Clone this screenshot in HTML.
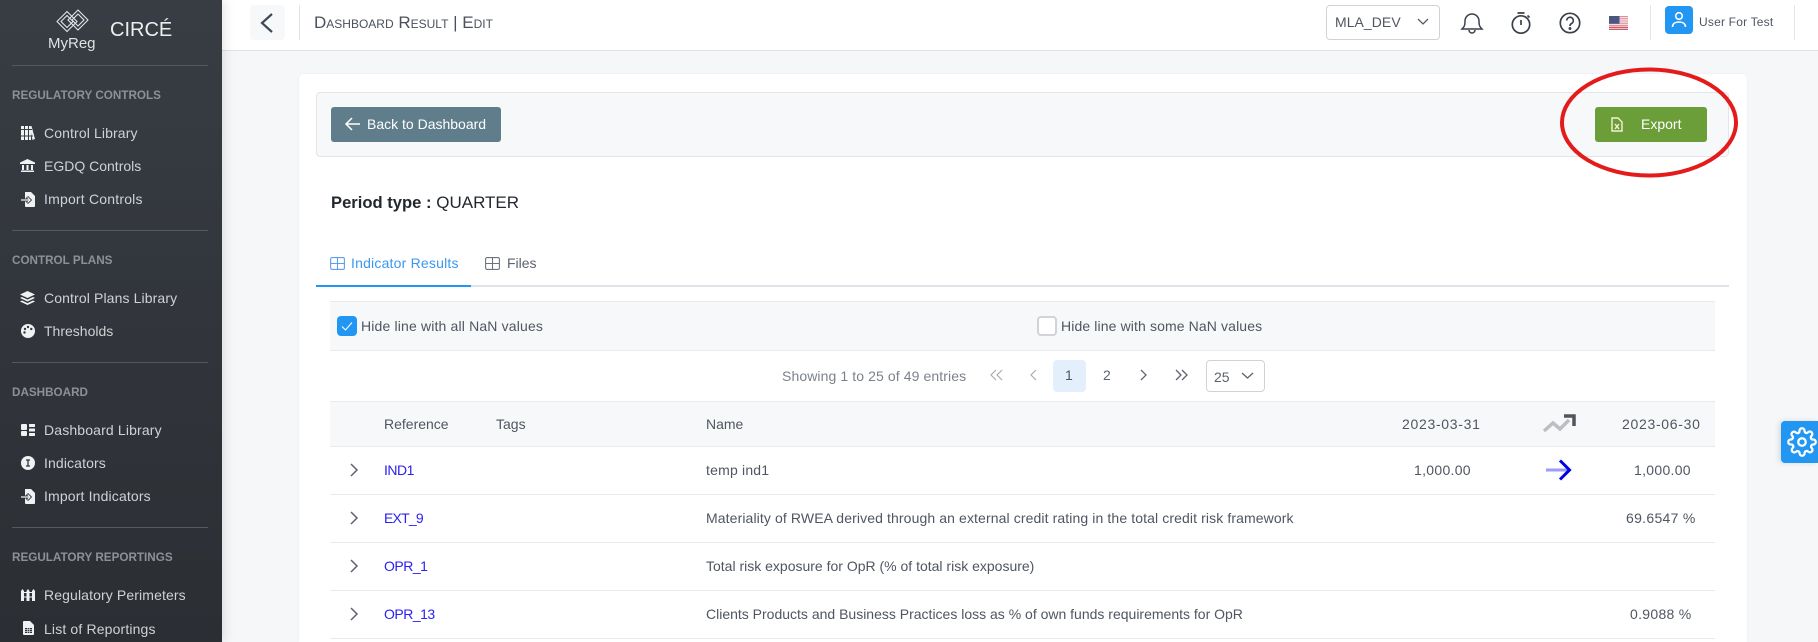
<!DOCTYPE html>
<html><head><meta charset="utf-8">
<style>
*{box-sizing:border-box}
html,body{margin:0;padding:0;width:1818px;height:642px;overflow:hidden;background:#f6f7f9;font-family:"Liberation Sans",sans-serif}
.t{position:absolute;white-space:nowrap;line-height:20px;height:20px;font-size:14px;color:#4f5661}
.b{position:absolute}
svg{position:absolute;overflow:visible}
#side{position:absolute;left:0;top:0;width:222px;height:642px;background:linear-gradient(180deg,#383d44,#2b2e33);box-shadow:3px 0 10px rgba(0,0,0,.10)}
#side .t{color:#cfd2d5;font-size:14px;letter-spacing:.12px}
#side .s{color:#8d9196;font-size:11.7px;font-weight:bold;letter-spacing:0}
#side hr{position:absolute;left:12px;width:196px;margin:0;border:0;border-top:1px solid #55595f}
.ln{position:absolute;left:330px;width:1385px;height:1px;background:#e8eaee}
.blue{color:#2b20f0;letter-spacing:-.5px}
.d{letter-spacing:.7px}
.n{letter-spacing:.3px}
</style></head><body>

<div class="b" style="left:222px;top:0;width:1596px;height:51px;background:#fff;border-bottom:1px solid #dfe2e8"></div>

<div id="side">
<svg style="left:56px;top:9px" width="33" height="24" viewBox="0 0 33 24" fill="none" stroke="#e4e6e8" stroke-width="1.100"><path d="M1 12.500 11 2.500 21 12.500 11 22.500z"/><path d="M12 11 22 1l10 10-10 10z"/><path d="M5 12.500 11 6.500 17 12.500 11 18.500z"/><path d="M16 11l6-6 6 6-6 6z"/></svg>
<div class="t" style="left:48px;top:34px;font-size:15px;color:#dfe1e3;letter-spacing:0">MyReg</div>
<div class="t" style="left:110px;top:20px;font-size:20px;color:#eceef0;letter-spacing:0">CIRCÉ</div>
<hr style="top:65px">
<div class="t s" style="left:12px;top:86px">REGULATORY CONTROLS</div>
<svg style="left:20px;top:126px" width="15" height="14" viewBox="0 0 15 14" fill="#f0f1f2"><path d="M1 0h3v14H1zM5 0h3v14H5zM9 0h2.500l3.500 13-2.500 1L11 7v7H9z"/><path d="M0 3.500h12M0 10h13" stroke="#383d44" stroke-width="1"/></svg>
<div class="t" style="left:44px;top:123px">Control Library</div>
<svg style="left:20px;top:159px" width="15" height="14" viewBox="0 0 15 14" fill="#f0f1f2"><path d="M7.500 0 15 3.500v1.500H0V3.500zM2 6h2v5H2zM6.500 6h2v5h-2zM11 6h2v5h-2zM1 11.500h13V13H1z"/></svg>
<div class="t" style="left:44px;top:156px;letter-spacing:0">EGDQ Controls</div>
<svg style="left:21px;top:192px" width="15" height="15" viewBox="0 0 15 15"><path d="M4 0h6l4 4v10a1 1 0 0 1-1 1H5a1 1 0 0 1-1-1z" fill="#f0f1f2"/><path d="M0 8h9M6 5l3 3-3 3" fill="none" stroke="#383d44" stroke-width="3"/><path d="M0 8h9M6.500 5.500 9 8l-2.500 2.500" fill="none" stroke="#f0f1f2" stroke-width="1.200"/></svg>
<div class="t" style="left:44px;top:189px;letter-spacing:.2px">Import Controls</div>
<hr style="top:230px">
<div class="t s" style="left:12px;top:251px">CONTROL PLANS</div>
<svg style="left:20px;top:291px" width="15" height="14" viewBox="0 0 15 14" fill="#f0f1f2"><path d="M7.500 0 15 3.500 7.500 7 0 3.500zM2 6l5.500 2.600L13 6l2 1-7.500 3.500L0 7zM2 9.500l5.500 2.600L13 9.500l2 1L7.500 14 0 10.500z"/></svg>
<div class="t" style="left:44px;top:288px">Control Plans Library</div>
<svg style="left:21px;top:324px" width="14" height="14" viewBox="0 0 14 14"><circle cx="7" cy="7" r="7" fill="#f0f1f2"/><circle cx="4" cy="5" r="1.200" fill="#343840"/><circle cx="7" cy="3" r="1.200" fill="#343840"/><circle cx="10.300" cy="5" r="1.200" fill="#343840"/><circle cx="3.500" cy="8.500" r="1.200" fill="#343840"/></svg>
<div class="t" style="left:44px;top:321px;letter-spacing:0">Thresholds</div>
<hr style="top:362px">
<div class="t s" style="left:12px;top:383px">DASHBOARD</div>
<svg style="left:21px;top:424px" width="14" height="12" viewBox="0 0 14 12" fill="#f0f1f2"><rect width="6" height="6" rx="1"/><rect y="7" width="6" height="5" rx="1"/><rect x="8" width="6" height="3" rx=".5"/><rect x="8" y="4.500" width="6" height="3" rx=".5"/><rect x="8" y="9" width="6" height="3" rx=".5"/></svg>
<div class="t" style="left:44px;top:420px;letter-spacing:.15px">Dashboard Library</div>
<svg style="left:21px;top:456px" width="14" height="14" viewBox="0 0 14 14"><circle cx="7" cy="7" r="7" fill="#f0f1f2"/><path d="M5 4h4M5 10h4M7 4v6" stroke="#30343a" stroke-width="1.300"/></svg>
<div class="t" style="left:44px;top:453px">Indicators</div>
<svg style="left:21px;top:489px" width="15" height="15" viewBox="0 0 15 15"><path d="M4 0h6l4 4v10a1 1 0 0 1-1 1H5a1 1 0 0 1-1-1z" fill="#f0f1f2"/><path d="M0 8h9M6 5l3 3-3 3" fill="none" stroke="#30343a" stroke-width="3"/><path d="M0 8h9M6.500 5.500 9 8l-2.500 2.500" fill="none" stroke="#f0f1f2" stroke-width="1.200"/></svg>
<div class="t" style="left:44px;top:486px;letter-spacing:.15px">Import Indicators</div>
<hr style="top:527px">
<div class="t s" style="left:12px;top:548px">REGULATORY REPORTINGS</div>
<svg style="left:21px;top:589px" width="14" height="12" viewBox="0 0 14 12" fill="#f0f1f2"><path d="M0 2 1.500 0 3 2v10H0zM5.500 2 7 0l1.500 2v10h-3zM11 2l1.500-2L14 2v10h-3z"/><path d="M0 3.500h14M0 8h14" stroke="#f0f1f2" stroke-width="1"/></svg>
<div class="t" style="left:44px;top:585px">Regulatory Perimeters</div>
<svg style="left:23px;top:621px" width="11" height="14" viewBox="0 0 11 14"><path d="M0 1a1 1 0 0 1 1-1h6l4 4v9a1 1 0 0 1-1 1H1a1 1 0 0 1-1-1z" fill="#f0f1f2"/><path d="M2 7h7v5H2z" fill="#2e3137"/><path d="M2 8.700h7M2 10.300h7M4.300 7v5M6.600 7v5" stroke="#f0f1f2" stroke-width=".6"/></svg>
<div class="t" style="left:44px;top:619px;letter-spacing:.15px">List of Reportings</div>
</div>

<!-- header -->
<div class="b" style="left:250px;top:5px;width:35px;height:35px;background:#f6f8fa;border-radius:4px"></div>
<svg style="left:250px;top:5px" width="35" height="35" viewBox="0 0 35 35" fill="none"><path d="M22 9 12 18l10 9" stroke="#3f4a57" stroke-width="2.200"/></svg>
<div class="b" style="left:299px;top:5px;width:1px;height:35px;background:#e2e4e8"></div>
<div class="t" style="left:314px;top:13px;font-size:17px;font-variant:small-caps;color:#4a515c">Dashboard Result | Edit</div>

<div class="b" style="left:1326px;top:5px;width:114px;height:35px;border:1px solid #cfd3d9;border-radius:4px"></div>
<div class="t" style="left:1335px;top:12px;color:#4f5661;letter-spacing:.05px">MLA_DEV</div>
<svg style="left:1417px;top:18px" width="12" height="8" viewBox="0 0 12 8" fill="none"><path d="M1 1l5 5 5-5" stroke="#555c66" stroke-width="1.300"/></svg>

<svg style="left:1461px;top:13px" width="22" height="21" viewBox="0 0 22 21" fill="none" stroke="#3a414b" stroke-width="1.500"><path d="M1 16c2-2 3-3 3-8a7 7 0 0 1 14 0c0 5 1 6 3 8z"/><path d="M8 17a3 3 0 0 0 6 0"/></svg>
<svg style="left:1510px;top:12px" width="22" height="22" viewBox="0 0 22 22" fill="none" stroke="#3a414b" stroke-width="1.700"><circle cx="11" cy="12.500" r="8.700"/><path d="M7.500 1h7M11 8v5M17.500 3.500l2 2"/></svg>
<svg style="left:1559px;top:12px" width="22" height="22" viewBox="0 0 22 22" fill="none" stroke="#3a414b" stroke-width="1.700"><circle cx="11" cy="11" r="9.700"/><path d="M7.700 8.500a3.300 3.300 0 1 1 4.800 3c-1 .6-1.500 1.200-1.500 2.500"/><circle cx="11" cy="16.500" r=".6" fill="#3a414b"/></svg>
<svg style="left:1609px;top:16px" width="19" height="14" viewBox="0 0 19 14"><rect width="19" height="14" fill="#fff"/><path d="M0 .7h19M0 2.800h19M0 5h19M0 7.200h19M0 9.300h19M0 11.300h19M0 13.300h19" stroke="#d8808a" stroke-width="1.100"/><path d="M0 11.300h19M0 13.300h19" stroke="#c7525e" stroke-width="1.100"/><rect width="10.500" height="7.800" fill="#4c5680"/></svg>
<div class="b" style="left:1650px;top:5px;width:1px;height:35px;background:#e2e4e8"></div>
<div class="b" style="left:1665px;top:6px;width:28px;height:28px;background:#2196f3;border-radius:4px"></div>
<svg style="left:1665px;top:6px" width="28" height="28" viewBox="0 0 28 28" fill="none" stroke="#fff" stroke-width="1.600"><circle cx="14" cy="10" r="3.300"/><path d="M7.500 21c0-3.500 3-5 6.500-5s6.500 1.500 6.500 5"/></svg>
<div class="t" style="left:1699px;top:12px;font-size:12px;color:#4f5661;letter-spacing:.2px">User For Test</div>
<div class="b" style="left:1794px;top:5px;width:1px;height:35px;background:#e2e4e8"></div>

<!-- card -->
<div class="b" style="left:299px;top:74px;width:1448px;height:568px;background:#fff;border-radius:5px 5px 0 0;box-shadow:0 0 2px rgba(0,0,0,.06)"></div>
<div class="b" style="left:316px;top:92px;width:1413px;height:65px;background:#f7f8fa;border:1px solid #e3e5e9;border-radius:4px"></div>
<div class="b" style="left:331px;top:107px;width:170px;height:35px;background:#607d8b;border-radius:3px"></div>
<svg style="left:345px;top:117px" width="16" height="14" viewBox="0 0 16 14" fill="none" stroke="#fff" stroke-width="1.500"><path d="M15 7H1M7 1 1 7l6 6"/></svg>
<div class="t" style="left:367px;top:114px;color:#fff">Back to Dashboard</div>
<div class="b" style="left:1595px;top:107px;width:112px;height:35px;background:#6b9e38;border-radius:3px"></div>
<svg style="left:1611px;top:117px" width="12" height="15" viewBox="0 0 12 15" fill="none" stroke="#f4f2d0" stroke-width="1.400"><path d="M1 1h6l4 4v9H1z"/><path d="M4 7l4 5M8 7l-4 5"/></svg>
<div class="t" style="left:1641px;top:114px;color:#fff">Export</div>

<div class="t" style="left:331px;top:193px;font-size:17px;color:#23282f"><b style="font-size:16.6px">Period type :</b> QUARTER</div>

<!-- tabs -->
<div class="b" style="left:316px;top:285px;width:1413px;height:2px;background:#dfe2e7"></div>
<div class="b" style="left:316px;top:285px;width:155px;height:2px;background:#2196f3"></div>
<svg style="left:330px;top:257px" width="15" height="13" viewBox="0 0 15 13" fill="none" stroke="#5b9fee" stroke-width="1.100"><rect x=".6" y=".6" width="13.800" height="11.800" rx="1.500"/><path d="M.6 6.500h13.800M7.500.6v11.800"/></svg>
<div class="t" style="left:351px;top:253px;color:#3a97f2;letter-spacing:.2px">Indicator Results</div>
<svg style="left:485px;top:257px" width="15" height="13" viewBox="0 0 15 13" fill="none" stroke="#6d737c" stroke-width="1.100"><rect x=".6" y=".6" width="13.800" height="11.800" rx="1.500"/><path d="M.6 6.500h13.800M7.500.6v11.800"/></svg>
<div class="t" style="left:507px;top:253px;color:#5d646e">Files</div>

<!-- filter band -->
<div class="b" style="left:330px;top:301px;width:1385px;height:50px;background:#f7f8fa;border-top:1px solid #e8eaee;border-bottom:1px solid #e8eaee"></div>
<div class="b" style="left:337px;top:316px;width:20px;height:20px;background:#2196f3;border-radius:4px"></div>
<svg style="left:337px;top:316px" width="20" height="20" viewBox="0 0 20 20" fill="none"><path d="M5 10.500l3.500 3.500L15 6.500" stroke="#fff" stroke-width="1.100"/></svg>
<div class="t" style="left:361px;top:316px;color:#4f5661;letter-spacing:.16px">Hide line with all NaN values</div>
<div class="b" style="left:1037px;top:316px;width:20px;height:20px;background:#fff;border:2px solid #d0d3d9;border-radius:4px"></div>
<div class="t" style="left:1061px;top:316px;color:#4f5661;letter-spacing:.12px">Hide line with some NaN values</div>

<!-- pagination -->
<div class="t" style="left:782px;top:366px;font-size:14px;color:#7c828b;letter-spacing:.1px">Showing 1 to 25 of 49 entries</div>
<svg style="left:990px;top:369px" width="14" height="12" viewBox="0 0 14 12" fill="none" stroke="#a8adb4" stroke-width="1.200"><path d="M6 1 1 6l5 5M12 1 7 6l5 5"/></svg>
<svg style="left:1030px;top:369px" width="7" height="12" viewBox="0 0 7 12" fill="none" stroke="#a8adb4" stroke-width="1.200"><path d="M6 1 1 6l5 5"/></svg>
<div class="b" style="left:1053px;top:360px;width:33px;height:32px;background:#e3f0fc;border-radius:4px"></div>
<div class="t" style="left:1065px;top:365px;font-size:14px;color:#4f5661">1</div>
<div class="t" style="left:1103px;top:365px;font-size:14px;color:#5d646e">2</div>
<svg style="left:1140px;top:369px" width="7" height="12" viewBox="0 0 7 12" fill="none" stroke="#5d646e" stroke-width="1.300"><path d="M1 1l5 5-5 5"/></svg>
<svg style="left:1174px;top:369px" width="14" height="12" viewBox="0 0 14 12" fill="none" stroke="#5d646e" stroke-width="1.300"><path d="M2 1l5 5-5 5M8 1l5 5-5 5"/></svg>
<div class="b" style="left:1206px;top:360px;width:59px;height:32px;border:1px solid #cfd3d9;border-radius:4px;background:#fff"></div>
<div class="t" style="left:1214px;top:367px;font-size:14px;color:#5d646e">25</div>
<svg style="left:1241px;top:372px" width="13" height="8" viewBox="0 0 13 8" fill="none" stroke="#5d646e" stroke-width="1.300"><path d="M1 1l5.500 5L12 1"/></svg>

<!-- table -->
<div class="b" style="left:330px;top:401px;width:1385px;height:46px;background:#f7f8fa;border-top:1px solid #e8eaee;border-bottom:1px solid #e8eaee"></div>
<div class="t" style="left:384px;top:414px">Reference</div>
<div class="t" style="left:496px;top:414px">Tags</div>
<div class="t" style="left:706px;top:414px">Name</div>
<div class="t d" style="left:1402px;top:414px">2023-03-31</div>
<svg style="left:1543px;top:414px" width="33" height="19" viewBox="0 0 33 19" fill="none" stroke-width="3.500"><path d="M1 17 10 9l7 6 9-9" stroke="#bcbec1"/><path d="M21 2h10v10" stroke="#50555c"/></svg>
<div class="t d" style="left:1622px;top:414px">2023-06-30</div>

<svg style="left:350px;top:463px" width="9" height="14" viewBox="0 0 9 14" fill="none" stroke="#5d646e" stroke-width="1.500"><path d="M1 1l6 6-6 6"/></svg>
<div class="t blue" style="left:384px;top:460px">IND1</div>
<div class="t" style="left:706px;top:460px;letter-spacing:.2px">temp ind1</div>
<div class="t n" style="left:1414px;top:460px">1,000.00</div>
<svg style="left:1546px;top:459px" width="26" height="22" viewBox="0 0 26 22" fill="none" stroke-width="3"><path d="M0 11h22" stroke="#9b9bfb"/><path d="M14 1.500 23.500 11 14 20.500" stroke="#0000e8"/></svg>
<div class="t n" style="left:1634px;top:460px">1,000.00</div>
<div class="ln" style="top:494px"></div>

<svg style="left:350px;top:511px" width="9" height="14" viewBox="0 0 9 14" fill="none" stroke="#5d646e" stroke-width="1.500"><path d="M1 1l6 6-6 6"/></svg>
<div class="t blue" style="left:384px;top:508px;letter-spacing:-.8px">EXT_9</div>
<div class="t" style="left:706px;top:508px;letter-spacing:.11px">Materiality of RWEA derived through an external credit rating in the total credit risk framework</div>
<div class="t n" style="left:1626px;top:508px">69.6547 %</div>
<div class="ln" style="top:542px"></div>

<svg style="left:350px;top:559px" width="9" height="14" viewBox="0 0 9 14" fill="none" stroke="#5d646e" stroke-width="1.500"><path d="M1 1l6 6-6 6"/></svg>
<div class="t blue" style="left:384px;top:556px">OPR_1</div>
<div class="t" style="left:706px;top:556px">Total risk exposure for OpR (% of total risk exposure)</div>
<div class="ln" style="top:590px"></div>

<svg style="left:350px;top:607px" width="9" height="14" viewBox="0 0 9 14" fill="none" stroke="#5d646e" stroke-width="1.500"><path d="M1 1l6 6-6 6"/></svg>
<div class="t blue" style="left:384px;top:604px">OPR_13</div>
<div class="t" style="left:706px;top:604px">Clients Products and Business Practices loss as % of own funds requirements for OpR</div>
<div class="t n" style="left:1630px;top:604px">0.9088 %</div>
<div class="ln" style="top:638px"></div>

<!-- red ellipse -->
<svg style="left:0;top:0" width="1818" height="642" fill="none"><ellipse cx="1649" cy="122.500" rx="87" ry="53" stroke="#e31b1b" stroke-width="4"/></svg>

<!-- gear -->
<div class="b" style="left:1781px;top:421px;width:37px;height:42px;background:#2196f3;border-radius:4px 0 0 4px;box-shadow:-2px 0 6px rgba(0,0,0,.12)"></div>
<svg style="left:1787px;top:427px" width="30" height="30" viewBox="0 0 24 24" fill="none" stroke="#fff" stroke-width="1.800"><circle cx="12" cy="12" r="3"/><path d="M19.400 15a1.650 1.650 0 0 0 .33 1.820l.06.06a2 2 0 1 1-2.830 2.830l-.06-.06a1.650 1.650 0 0 0-2.820 1.170V21a2 2 0 0 1-4 0v-.09A1.650 1.650 0 0 0 7.270 19.740l-.06.06a2 2 0 1 1-2.830-2.830l.06-.06A1.650 1.650 0 0 0 3.270 14H3a2 2 0 0 1 0-4h.09a1.650 1.650 0 0 0 1.170-2.820l-.06-.06a2 2 0 1 1 2.830-2.830l.06.06A1.650 1.650 0 0 0 10 3.270V3a2 2 0 0 1 4 0v.09a1.650 1.650 0 0 0 2.820 1.170l.06-.06a2 2 0 1 1 2.830 2.830l-.06.06A1.650 1.650 0 0 0 20.910 10H21a2 2 0 0 1 0 4h-.09a1.650 1.650 0 0 0-1.510 1z"/></svg>
</body></html>
